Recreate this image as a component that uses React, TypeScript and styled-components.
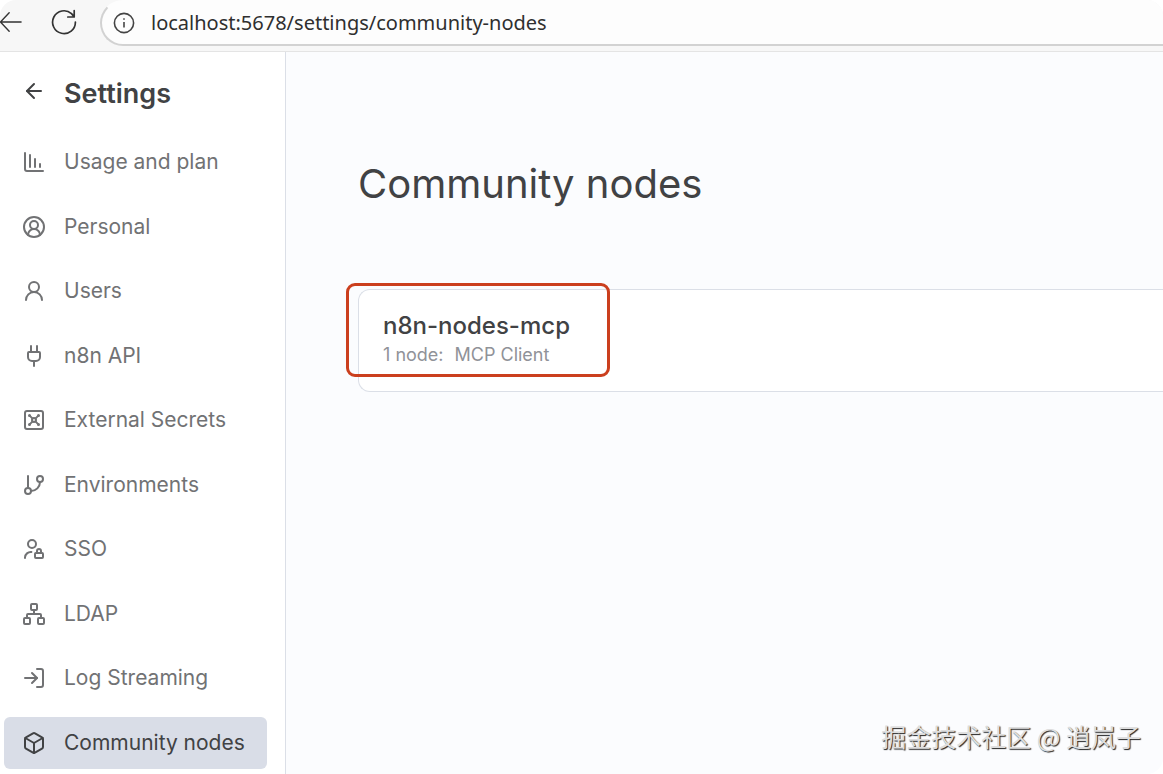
import React from "react";
import styled, { createGlobalStyle, css } from "styled-components";
import {
  ArrowLeft,
  Box,
  ChartColumnDecreasing,
  CircleUserRound,
  GitBranch,
  LogIn,
  Network,
  Plug,
  UserRound,
  Vault,
} from "lucide-react";

const GlobalStyle = createGlobalStyle`
  *, *::before, *::after { box-sizing: border-box; }
  body {
    margin: 0;
    background: #fff;
    font-family: Inter, "Liberation Sans", "Noto Sans CJK SC", sans-serif;
  }
`;

const Page = styled.div`
  display: flex;
  flex-direction: column;
  min-height: 100vh;
  overflow: hidden;
  border-radius: 16px;
  background: #fff;
`;

const BrowserBar = styled.header`
  display: flex;
  align-items: flex-start;
  height: 52px;
  background: #f7f7f7;
  border-bottom: 1px solid #e4e4e4;
  overflow: hidden;
`;

const ToolButton = styled.button<{ $width: number }>`
  display: flex;
  flex: none;
  align-items: center;
  justify-content: flex-end;
  width: ${(p) => p.$width}px;
  height: 44px;
  padding: 0;
  border: 0;
  background: none;
  color: #333;
`;

const AddressField = styled.label`
  display: flex;
  flex: 1;
  align-items: center;
  gap: 16px;
  height: 46px;
  margin-left: 23px;
  padding-left: 11px;
  border: 2px solid #d2d2d2;
  border-top-color: #fdfdfd;
  border-right: 0;
  border-radius: 24px 0 0 24px;
  background: #fdfdfd;
  color: #444;
`;

const AddressInput = styled.input`
  flex: 1;
  min-width: 0;
  height: 32px;
  padding: 0;
  border: 0;
  outline: 0;
  background: none;
  color: #2f2f2f;
  font: 20px/32px "Noto Sans", sans-serif;
`;

const Workspace = styled.div`
  display: flex;
  flex: 1;
`;

const Sidebar = styled.aside`
  display: flex;
  flex: none;
  flex-direction: column;
  width: 286px;
  padding: 20px 18px 5px 4px;
  border-right: 1px solid #dbdfe7;
  background: #fff;
`;

const SidebarHeader = styled.a`
  display: flex;
  align-items: flex-start;
  gap: 18px;
  height: 44px;
  padding: 7px 0 0 18px;
  color: #414244;
  text-decoration: none;
`;

const SidebarTitle = styled.h2`
  margin: 0;
  font-size: 27px;
  line-height: 30px;
  font-weight: 600;
`;

const Nav = styled.nav`
  display: flex;
  flex: 1;
  flex-direction: column;
`;

const NavList = styled.ul`
  display: flex;
  flex: 1;
  flex-direction: column;
  justify-content: space-between;
  gap: 12px;
  margin: 20px 0 0;
  padding: 0;
  list-style: none;
`;

const NavLink = styled.a<{ $active?: boolean }>`
  display: flex;
  align-items: center;
  gap: 18px;
  height: 52px;
  padding-left: 18px;
  border-radius: 6px;
  color: #717274;
  font-size: 21px;
  line-height: 28px;
  text-decoration: none;
  ${(p) =>
    p.$active &&
    css`
      background: #d9dde7;
      color: #414244;
    `}
`;

const Main = styled.main`
  flex: 1;
  min-width: 0;
  padding: 104px 0 0 72px;
  background: #fbfcfe;
`;

const PageTitle = styled.h1`
  margin: 0;
  color: #414244;
  font-size: 40px;
  line-height: 56px;
  font-weight: 400;
`;

const PackageCard = styled.article`
  position: relative;
  height: 103px;
  margin-top: 77px;
  padding: 20px 24px;
  border: 1px solid #dbdfe7;
  border-right: 0;
  border-radius: 12px 0 0 12px;
  background: #fff;
`;

const PackageName = styled.h3`
  margin: 0;
  color: #414244;
  font-size: 24px;
  line-height: 32px;
  font-weight: 500;
`;

const PackageInfo = styled.p`
  display: flex;
  gap: 11px;
  margin: 0;
  color: #909298;
  font-size: 18px;
  line-height: 26px;
`;

const Highlight = styled.div`
  position: absolute;
  top: -7px;
  left: -13px;
  width: 264px;
  height: 94px;
  border: 3px solid #cb3f1e;
  border-radius: 9px;
  pointer-events: none;
`;

const Watermark = styled.p`
  position: absolute;
  right: 22px;
  bottom: 20px;
  margin: 0;
  color: #dedede;
  font: 25px/36px "Noto Sans CJK SC", sans-serif;
  text-shadow: 1px 1px 1px #222;
`;

const BackIcon = () => (
  <svg width="24" height="24" viewBox="0 0 24 24" fill="none" stroke="currentColor" strokeWidth="1.5" strokeLinecap="round" strokeLinejoin="round" aria-hidden="true">
    <path d="M10 2L0.5 12L10 22M0.5 12H23" />
  </svg>
);

const ReloadIcon = () => (
  <svg width="26" height="26" viewBox="0 0 26 26" fill="none" stroke="currentColor" strokeWidth="1.7" strokeLinecap="round" strokeLinejoin="round" aria-hidden="true">
    <path d="M24.4 13A11.4 11.4 0 1 1 20.5 4.6L23 7.6M23.2 1.5V8H16.8" />
  </svg>
);

const InfoIcon = () => (
  <svg width="22" height="22" viewBox="0 0 22 22" fill="none" stroke="currentColor" strokeWidth="1.6" aria-hidden="true">
    <circle cx="11" cy="11" r="9.6" />
    <path d="M11 10V15.5" />
    <circle cx="11" cy="7" r="0.6" fill="currentColor" strokeWidth="0.6" />
  </svg>
);

const UserLockIcon = () => (
  <svg width="24" height="24" viewBox="0 0 24 24" fill="none" stroke="currentColor" strokeWidth="2" strokeLinecap="round" strokeLinejoin="round" aria-hidden="true">
    <circle cx="10" cy="7" r="4" />
    <path d="M3 21v-.5A5.8 5.8 0 0 1 9.4 15" />
    <rect x="13" y="16" width="8" height="5" rx="0.9" />
    <path d="M15 16v-2a2 2 0 0 1 4 0v2" />
  </svg>
);

const navItems = [
  { label: "Usage and plan", icon: <ChartColumnDecreasing /> },
  { label: "Personal", icon: <CircleUserRound /> },
  { label: "Users", icon: <UserRound /> },
  { label: "n8n API", icon: <Plug /> },
  { label: "External Secrets", icon: <Vault /> },
  { label: "Environments", icon: <GitBranch /> },
  { label: "SSO", icon: <UserLockIcon /> },
  { label: "LDAP", icon: <Network /> },
  { label: "Log Streaming", icon: <LogIn /> },
  { label: "Community nodes", icon: <Box />, active: true },
];

export default function App() {
  return (
    <Page>
      <GlobalStyle />
      <BrowserBar>
        <ToolButton $width={22} aria-label="Back">
          <BackIcon />
        </ToolButton>
        <ToolButton $width={55} aria-label="Reload">
          <ReloadIcon />
        </ToolButton>
        <AddressField>
          <InfoIcon />
          <AddressInput aria-label="Address" defaultValue="localhost:5678/settings/community-nodes" />
        </AddressField>
      </BrowserBar>
      <Workspace>
        <Sidebar>
          <SidebarHeader href="#home">
            <ArrowLeft />
            <SidebarTitle>Settings</SidebarTitle>
          </SidebarHeader>
          <Nav>
            <NavList>
              {navItems.map((item) => (
                <li key={item.label}>
                  <NavLink href="#settings" $active={item.active}>
                    {item.icon}
                    {item.label}
                  </NavLink>
                </li>
              ))}
            </NavList>
          </Nav>
        </Sidebar>
        <Main>
          <PageTitle>Community nodes</PageTitle>
          <PackageCard>
            <PackageName>n8n-nodes-mcp</PackageName>
            <PackageInfo>
              <span>1 node:</span>
              <span>MCP Client</span>
            </PackageInfo>
            <Highlight />
          </PackageCard>
        </Main>
      </Workspace>
      <Watermark>掘金技术社区 @ 逍岚子</Watermark>
    </Page>
  );
}
